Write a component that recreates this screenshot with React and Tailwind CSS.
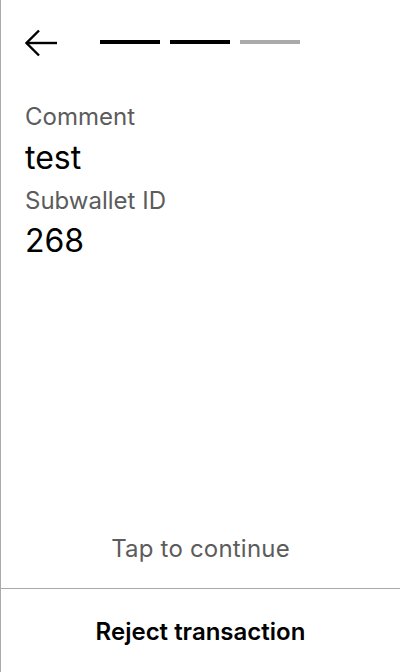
export default function App() {
  return (
    <div
      className="w-[400px] h-[672px] bg-white border-l border-[#aaaaaa] flex flex-col"
      style={{ fontFamily: "Inter, 'Noto Sans', sans-serif" }}
    >
      <div className="flex items-center h-[86px] pl-[24px]">
        <svg width="34" height="28" viewBox="0 0 34 28" fill="none" stroke="black" strokeWidth="2.4">
          <path d="M1.5 14 H32" />
          <path d="M14 1.5 L1.5 14 L14 26.5" />
        </svg>
        <div className="flex gap-[10px] ml-[41px] mt-[-2px]">
          <div className="w-[60px] h-[4px] bg-black" />
          <div className="w-[60px] h-[4px] bg-black" />
          <div className="w-[60px] h-[4px] bg-[#aaaaaa]" />
        </div>
      </div>
      <div className="flex flex-col px-[24px] pt-[15px]">
        <div className="text-[24px] leading-[32px] text-[#5c5c5c]">Comment</div>
        <div className="text-[32px] leading-[48px] mt-[1px] text-black">test</div>
        <div className="text-[24px] leading-[32px] mt-[3px] text-[#5c5c5c]">Subwallet ID</div>
        <div className="text-[32px] leading-[48px] text-black">268</div>
      </div>
      <div className="flex-1" />
      <div className="text-center text-[24px] leading-[32px] text-[#5c5c5c] pb-[23px] tracking-[0.2px]">Tap to continue</div>
      <div className="border-t border-[#aaaaaa] h-[84px] pt-[2px] flex items-center justify-center">
        <span className="text-[24px] leading-[32px] font-semibold text-black">Reject transaction</span>
      </div>
    </div>
  );
}
